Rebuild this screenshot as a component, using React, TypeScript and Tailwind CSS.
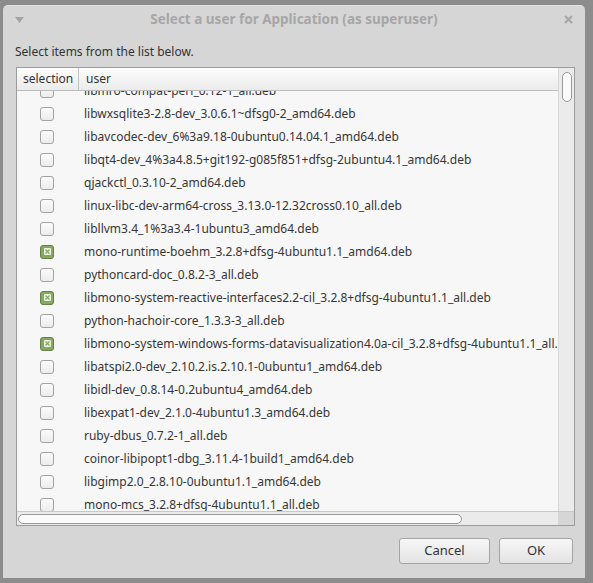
import React from 'react';

type Row = { name: string; checked?: boolean };

const rows: Row[] = [
    { name: 'libmro-compat-perl_0.12-1_all.deb' },
    { name: 'libwxsqlite3-2.8-dev_3.0.6.1~dfsg0-2_amd64.deb' },
    { name: 'libavcodec-dev_6%3a9.18-0ubuntu0.14.04.1_amd64.deb' },
    { name: 'libqt4-dev_4%3a4.8.5+git192-g085f851+dfsg-2ubuntu4.1_amd64.deb' },
    { name: 'qjackctl_0.3.10-2_amd64.deb' },
    { name: 'linux-libc-dev-arm64-cross_3.13.0-12.32cross0.10_all.deb' },
    { name: 'libllvm3.4_1%3a3.4-1ubuntu3_amd64.deb' },
    { name: 'mono-runtime-boehm_3.2.8+dfsg-4ubuntu1.1_amd64.deb', checked: true },
    { name: 'pythoncard-doc_0.8.2-3_all.deb' },
    { name: 'libmono-system-reactive-interfaces2.2-cil_3.2.8+dfsg-4ubuntu1.1_all.deb', checked: true },
    { name: 'python-hachoir-core_1.3.3-3_all.deb' },
    { name: 'libmono-system-windows-forms-datavisualization4.0a-cil_3.2.8+dfsg-4ubuntu1.1_all.deb', checked: true },
    { name: 'libatspi2.0-dev_2.10.2.is.2.10.1-0ubuntu1_amd64.deb' },
    { name: 'libidl-dev_0.8.14-0.2ubuntu4_amd64.deb' },
    { name: 'libexpat1-dev_2.1.0-4ubuntu1.3_amd64.deb' },
    { name: 'ruby-dbus_0.7.2-1_all.deb' },
    { name: 'coinor-libipopt1-dbg_3.11.4-1build1_amd64.deb' },
    { name: 'libgimp2.0_2.8.10-0ubuntu1.1_amd64.deb' },
    { name: 'mono-mcs_3.2.8+dfsg-4ubuntu1.1_all.deb' },
];

function Checkbox({ checked }: { checked?: boolean }) {
    if (checked) {
        return (
            <div className="w-[14px] h-[14px] rounded-[3px] border border-[#66804c] bg-[#86a85f] flex items-center justify-center">
                <div className="w-[7px] h-[7px] rounded-[1px] bg-[#eef3e8] flex items-center justify-center">
                    <svg width="5" height="5" viewBox="0 0 5 5">
                        <path d="M0.5 0.5 L4.5 4.5 M4.5 0.5 L0.5 4.5" stroke="#86a85f" strokeWidth="1.3" />
                    </svg>
                </div>
            </div>
        );
    }
    return <div className="w-[14px] h-[14px] rounded-[3px] border border-[#a2a2a2] bg-gradient-to-b from-[#fbfbfb] to-[#ececec]" />;
}

export default function App() {
    return (
        <div
            className="w-[593px] h-[583px] bg-[#8c8c8c] pt-[5px] pl-[3px] overflow-hidden"
            style={{ fontFamily: '"Noto Sans", sans-serif' }}
        >
            <div className="w-[582px] h-[573px] bg-[#d6d6d6] rounded-t-[5px] flex flex-col border-t border-[#e2e2e2]">
                {/* Title bar */}
                <div className="h-[27px] flex items-center px-[12px] relative shrink-0">
                    <svg width="9" height="6" viewBox="0 0 9 6" className="mt-[1px]">
                        <path d="M0 0 H9 L4.5 6 Z" fill="#a4a4a4" />
                    </svg>
                    <div className="flex-1 text-center text-[13.5px] font-bold text-[#a6a6a6] leading-none">
                        Select a user for Application (as superuser)
                    </div>
                    <svg width="9" height="9" viewBox="0 0 9 9">
                        <path d="M1 1 L8 8 M8 1 L1 8" stroke="#a6a6a6" strokeWidth="2" />
                    </svg>
                </div>

                {/* Label */}
                <div className="mt-[10px] pl-[12px] text-[12px] leading-[18px] text-[#333333]">
                    Select items from the list below.
                </div>

                {/* List box */}
                <div className="mt-[6px] ml-[13px] w-[559px] h-[459px] border border-[#9c9c9c] bg-[#f7f7f7] flex flex-col shrink-0">
                    <div className="flex flex-1 min-h-0">
                        <div className="w-[541px] flex flex-col">
                            {/* Header */}
                            <div className="h-[23px] flex text-[12px] text-[#333333] bg-gradient-to-b from-[#fdfdfd] to-[#ebebeb] border-b border-[#bdbdbd] shrink-0">
                                <div className="w-[62px] pl-[6px] flex items-center border-r border-[#c4c4c4]">selection</div>
                                <div className="flex-1 pl-[7px] flex items-center">user</div>
                            </div>
                            {/* Rows */}
                            <div className="flex-1 overflow-hidden">
                                <div className="-mt-[12px]">
                                    {rows.map((row) => (
                                        <div key={row.name} className="h-[23px] flex items-center text-[12px] text-[#363636] whitespace-nowrap">
                                            <div className="w-[62px] pl-[23px] flex items-center shrink-0">
                                                <Checkbox checked={row.checked} />
                                            </div>
                                            <div className="pl-[5px]">{row.name}</div>
                                        </div>
                                    ))}
                                </div>
                            </div>
                        </div>
                        {/* Vertical scrollbar */}
                        <div className="w-[16px] bg-[#ebebeb] border-l border-[#d8d8d8] pt-[4px] flex justify-center">
                            <div className="w-[10px] h-[30px] rounded-[5px] border border-[#9a9a9a] bg-[#fafafa]" />
                        </div>
                    </div>
                    {/* Horizontal scrollbar */}
                    <div className="h-[14px] flex shrink-0 border-t border-[#c8c8c8]">
                        <div className="w-[541px] bg-[#ebebeb] flex items-center pl-[1px]">
                            <div className="w-[444px] h-[10px] rounded-[5px] border border-[#9a9a9a] bg-[#fafafa]" />
                        </div>
                        <div className="flex-1 bg-[#d6d6d6]" />
                    </div>
                </div>

                {/* Buttons */}
                <div className="mt-[12px] flex justify-end gap-[9px] pr-[12px]">
                    <button className="w-[91px] h-[26px] rounded-[3px] border border-[#a4a4a4] bg-gradient-to-b from-[#f7f7f7] to-[#e3e3e3] text-[13px] text-[#333333]">
                        Cancel
                    </button>
                    <button className="w-[74px] h-[26px] rounded-[3px] border border-[#a4a4a4] bg-gradient-to-b from-[#f7f7f7] to-[#e3e3e3] text-[13px] text-[#333333]">
                        OK
                    </button>
                </div>
            </div>
        </div>
    );
}
